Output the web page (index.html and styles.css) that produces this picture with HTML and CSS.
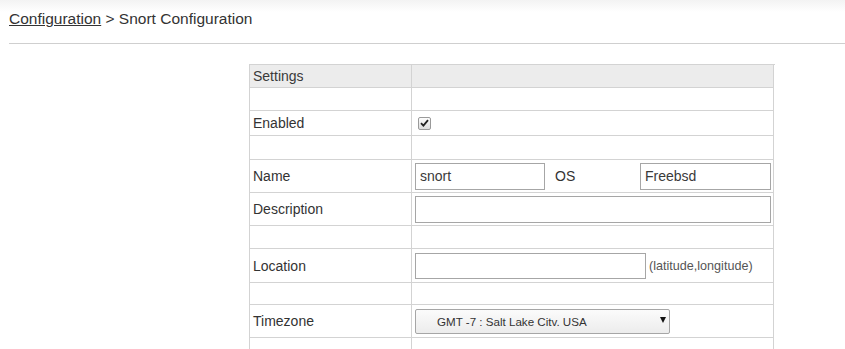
FILE: index.html
```html
<!DOCTYPE html>
<html>
<head>
<meta charset="utf-8">
<link rel="stylesheet" href="styles.css">
</head>
<body>
<div class="crumbs"><a class="crumb-link" href="#">Configuration</a> &gt; Snort Configuration</div>
<div class="settings">
  <div class="cell head label">Settings</div>
  <div class="cell head"></div>

  <div class="cell r23"></div><div class="cell r23"></div>

  <div class="cell r25 label">Enabled</div>
  <div class="cell r25 value"><span class="check"><svg width="9" height="8" viewBox="0 0 9 8"><path d="M1 4.2 L3.4 6.6 L8 1.2" fill="none" stroke="#222" stroke-width="1.8"/></svg></span></div>

  <div class="cell r24"></div><div class="cell r24"></div>

  <div class="cell r33 label">Name</div>
  <div class="cell r33 value">
    <input class="field f-name" type="text" value="snort">
    <span class="os">OS</span>
    <input class="field f-os" type="text" value="Freebsd">
  </div>

  <div class="cell r33 label">Description</div>
  <div class="cell r33 value"><input class="field f-desc" type="text" value=""></div>

  <div class="cell r23"></div><div class="cell r23"></div>

  <div class="cell r34 label">Location</div>
  <div class="cell r34 value"><input class="field f-loc" type="text" value=""><span class="hint">(latitude,longitude)</span></div>

  <div class="cell r22"></div><div class="cell r22"></div>

  <div class="cell r33 label">Timezone</div>
  <div class="cell r33 value"><span class="select-wrap"><select class="tz"><option>GMT -7 : Salt Lake Citv. USA</option></select></span></div>

  <div class="cell r24"></div><div class="cell r24"></div>
</div>
</body>
</html>
```
FILE: styles.css
```css
html, body {
  margin: 0;
  padding: 0;
  background: #fff;
}
body {
  font-family: "Liberation Sans", Arial, sans-serif;
  color: #333;
  background: linear-gradient(#f3f3f3, #fff 12px) no-repeat;
  overflow: hidden;
}
.crumbs {
  margin-left: 9px;
  padding: 10px 0 15px 0;
  line-height: 18px;
  font-size: 15.5px;
  color: #333;
  border-bottom: 1px solid #cfcfcf;
}
.crumb-link {
  color: #333;
  text-decoration: underline;
}
.settings {
  margin: 20px 0 0 249px;
  width: 525px;
  display: grid;
  grid-template-columns: 162px 362px;
  border-top: 1px solid #d3d3d3;
  border-left: 1px solid #d3d3d3;
  font-size: 14px;
}
.cell {
  box-sizing: border-box;
  border-right: 1px solid #d3d3d3;
  border-bottom: 1px solid #d3d3d3;
  display: flex;
  align-items: center;
  padding-left: 3px;
}
.head {
  height: 23px;
  background: #ececec;
  color: #3a3a3a;
  padding-left: 4px;
}
.label { padding-left: 3px; }
.r22 { height: 22px; }
.r23 { height: 23px; }
.r24 { height: 24px; }
.r25 { height: 25px; }
.r33 { height: 33px; }
.r34 { height: 34px; }
.value { padding-left: 3px; }
.check {
  box-sizing: border-box;
  width: 13px;
  height: 13px;
  margin-left: 3px;
  border: 1px solid #9a9a9a;
  border-radius: 2px;
  background: linear-gradient(#fdfdfd, #dcdcdc);
  display: flex;
  align-items: center;
  justify-content: center;
}
.field {
  box-sizing: border-box;
  margin: 0;
  height: 27px;
  border: 1px solid #a6a6a6;
  padding: 0 4px;
  font-family: "Liberation Sans", Arial, sans-serif;
  font-size: 14px;
  color: #3a3a3a;
  background: #fff;
  outline: none;
}
.f-name { width: 130px; }
.f-os { width: 131px; }
.f-desc { width: 356px; }
.f-loc { width: 231px; height: 26px; }
.os {
  box-sizing: border-box;
  width: 95px;
  padding-left: 10px;
  color: #333;
}
.hint {
  margin-left: 3px;
  font-size: 12.6px;
  color: #555;
}
.select-wrap {
  position: relative;
  display: inline-block;
}
.select-wrap::after {
  content: "";
  position: absolute;
  right: 4px;
  top: 8px;
  border-left: 3px solid transparent;
  border-right: 3px solid transparent;
  border-top: 6px solid #111;
  pointer-events: none;
}
.tz {
  -webkit-appearance: none;
  appearance: none;
  box-sizing: border-box;
  width: 255px;
  height: 25px;
  margin: 0;
  padding: 0 0 0 21px;
  border: 1px solid #a6a6a6;
  border-radius: 2px;
  background: linear-gradient(#fbfbfb, #ececec);
  font-family: "Liberation Sans", Arial, sans-serif;
  font-size: 11.6px;
  color: #333;
  outline: none;
}
```
